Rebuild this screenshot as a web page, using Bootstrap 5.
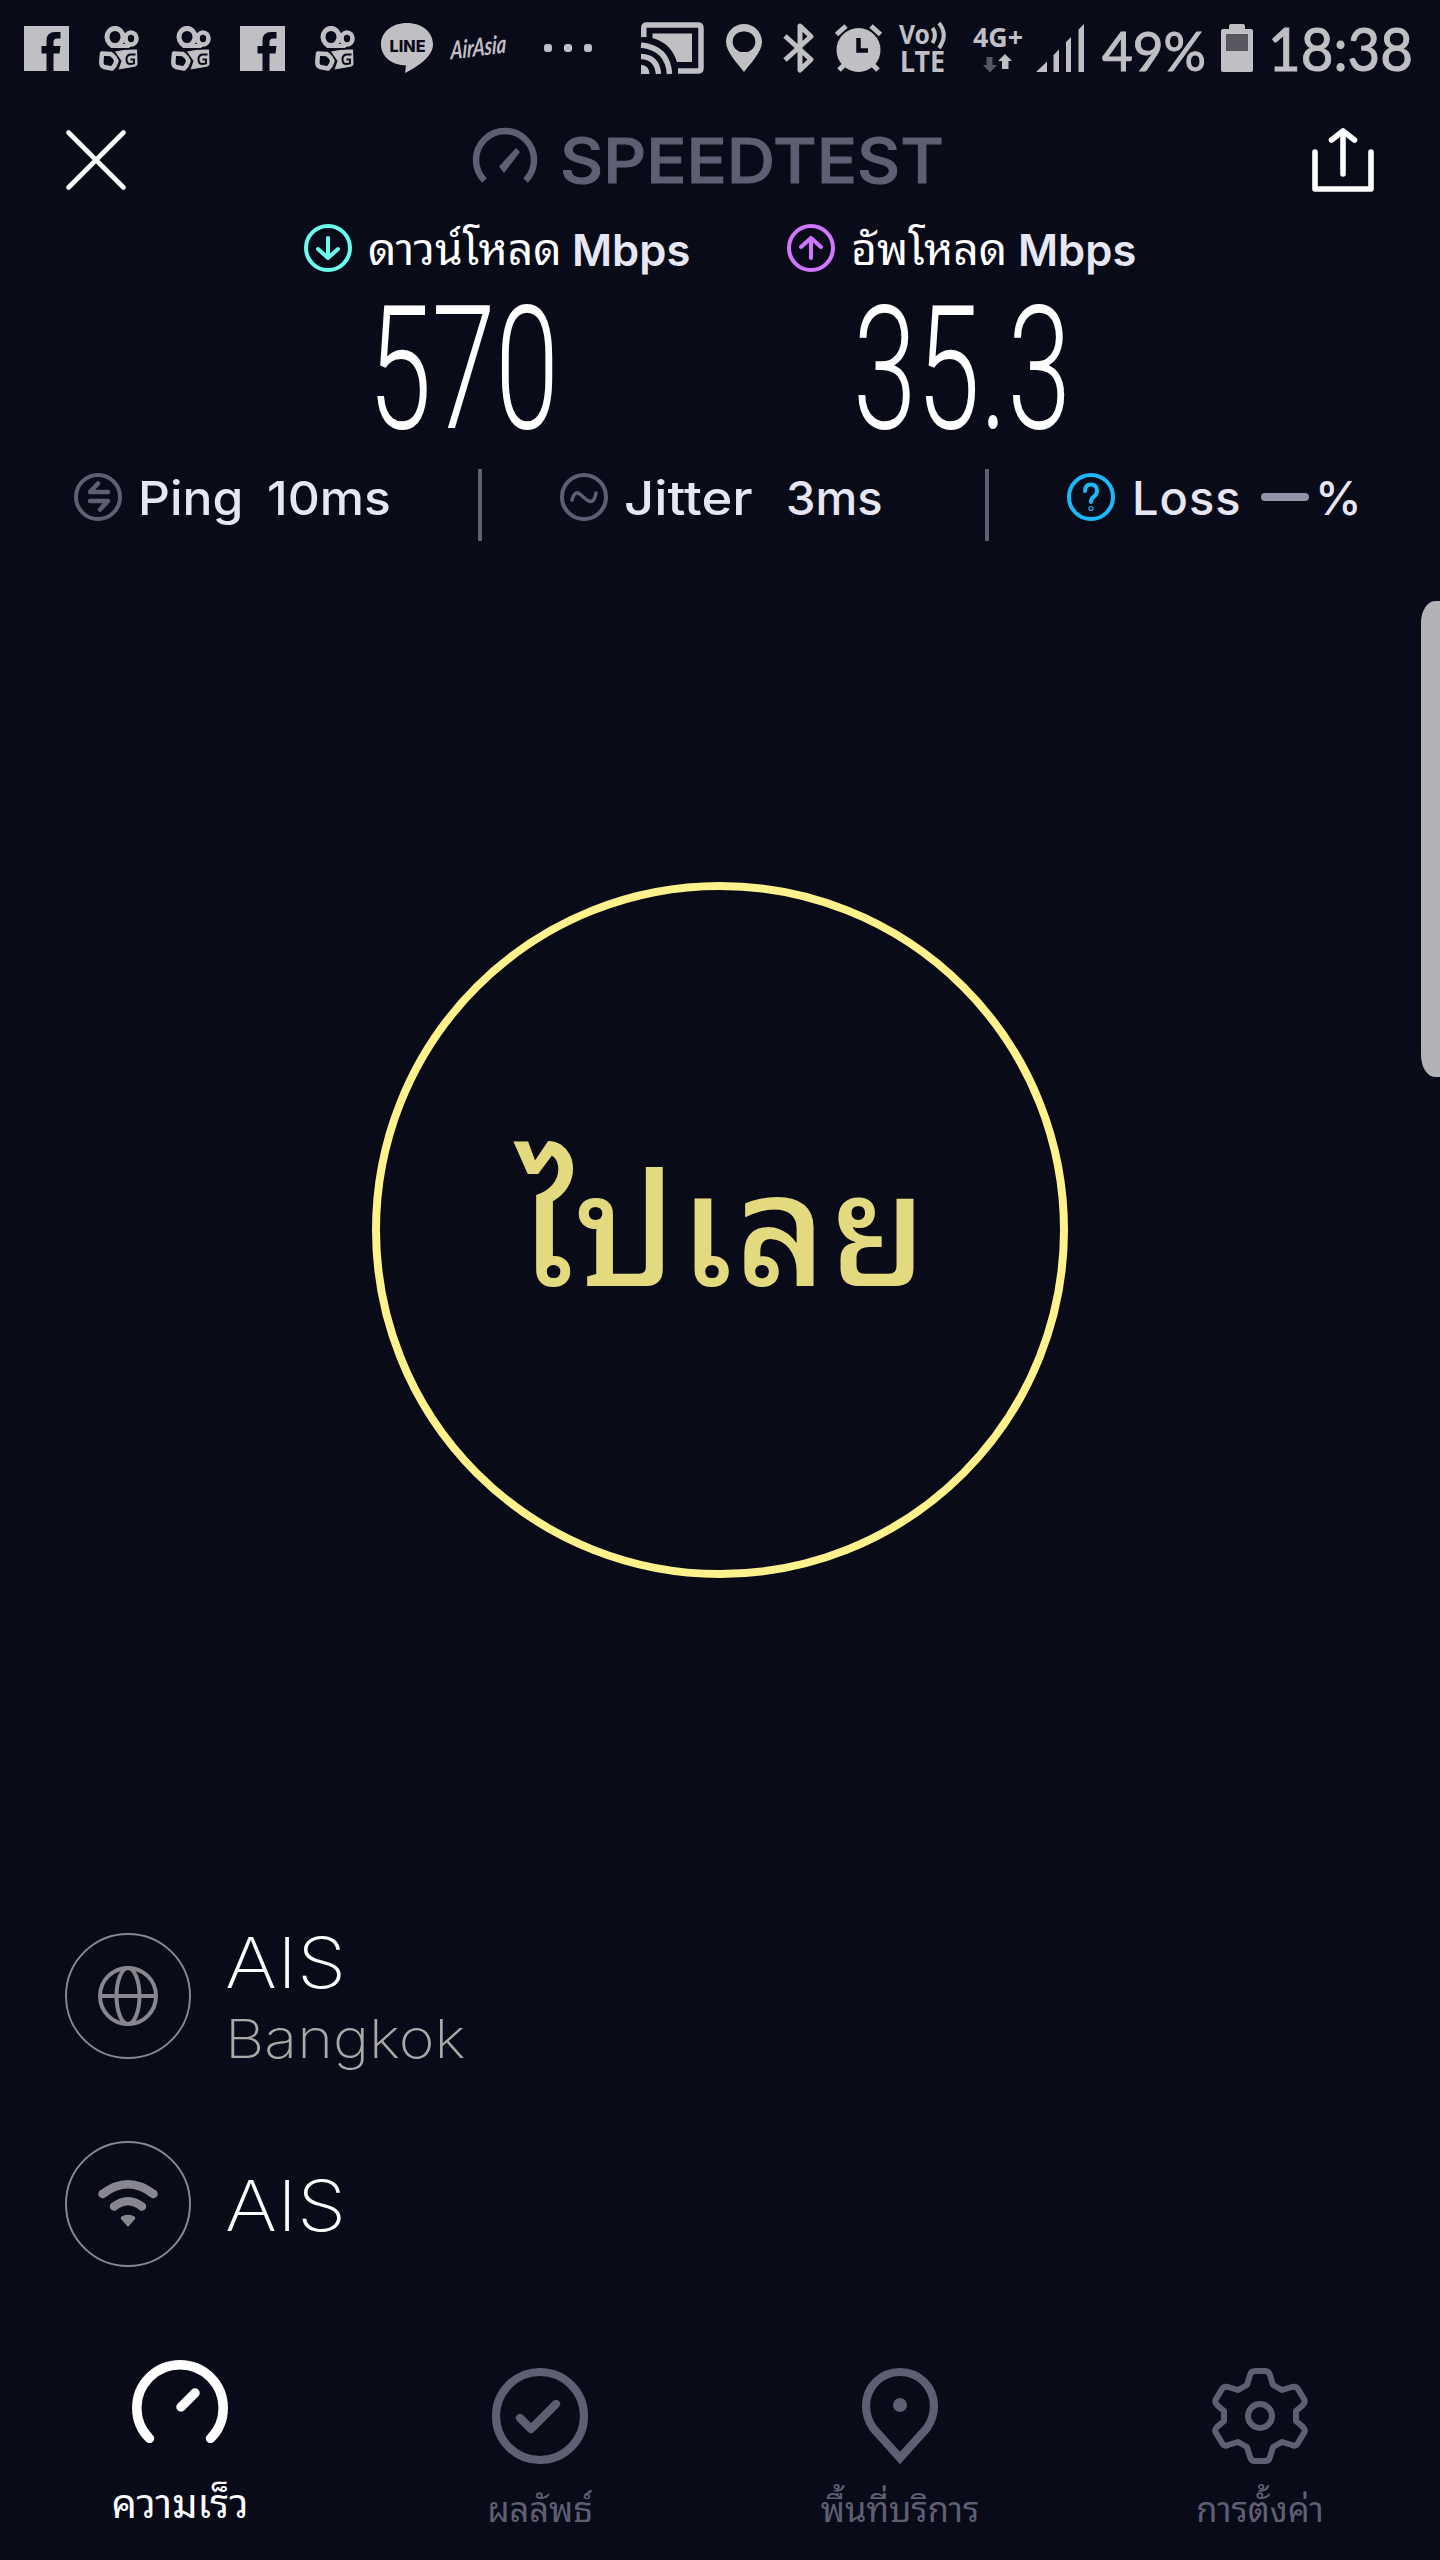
<!DOCTYPE html>
<html lang="th">
<head>
<meta charset="utf-8">
<meta name="viewport" content="width=device-width, initial-scale=1">
<title>Speedtest</title>
<link href="https://cdn.jsdelivr.net/npm/bootstrap@5.3.0/dist/css/bootstrap.min.css" rel="stylesheet">
<style>
:root{--ink:#090b19;--muted:#5e5f72;--soft:#e7e6f3;--sys:#c0bfc4}
body{background:var(--ink);color:#fff;font-family:Inter,"Noto Sans Thai Looped",Loma,Garuda,Waree,"Droid Sans Thai","Noto Sans Thai","Noto Sans",sans-serif;margin:0}
svg{display:block;flex:none;overflow:visible}
.phone{width:1440px;height:2560px;overflow:hidden}
.statusbar{height:96px;padding-left:24px;color:var(--sys)}
.appbar{height:128px;padding:0 66px}
.brand{color:var(--muted);margin-left:-25px}
.speeds{height:232px}
.speed-col{width:483px}
.speed-label{height:48px;line-height:48px;white-space:nowrap}
.th-label{font-size:44.5px;padding-top:1px}
.unit{font-weight:600;font-size:43.5px;color:var(--soft);padding-top:2px}
.metrics{height:90px;color:var(--soft);font-size:47px;font-weight:500;line-height:58px;white-space:nowrap}
.metrics .vbar{width:4px;height:72px;background:var(--muted);margin-top:13px}
.metric-item{padding-top:13px}
.metric-item span{transform-origin:0 50%}
.wide-1{transform:scaleX(1.06)}
.wide-2{transform:scaleX(1.12)}
.dash{width:48px;height:8px;border-radius:4px;background:#9292a8}
.hero{height:1387px;padding-top:336px}
.go{width:696px;height:696px;border:8px solid #fff28c;border-radius:50%;color:#e3d97f;font-size:156px;font-weight:500;line-height:1;letter-spacing:3px;background:none}
.host-row{padding-left:65px;height:126px}
.host-ring{width:126px;height:126px;border:2px solid #88878f;border-radius:50%}
.host-text{margin-left:34px;font-weight:200;white-space:nowrap;transform:scaleX(1.13);transform-origin:0 50%}
.host-name{font-size:70px;line-height:68px}
.host-city{font-size:54px;line-height:60px;color:#aaa9a7;padding-top:12px}
.tabs{height:236px;margin-top:57px}
.tab-link{width:360px;color:var(--muted);font-size:34.5px;line-height:51px;white-space:nowrap}
.tab-link.active{color:#fff;font-size:40px}
.edge-handle{position:absolute;right:0;top:601px;width:19px;height:476px;background:#b2b2b6;border-radius:14px 0 0 14px/22px 0 0 22px}
</style>
</head>
<body>
<svg width="0" height="0" class="position-absolute">
  <defs>
    <symbol id="fb" viewBox="0 0 45 45"><path fill="#c0bfc4" d="M0 0H45V45H29.5V27.5H35.5L36.5 20H29.5V16Q29.5 12.5 33 12.5H36.5V6H31Q22.500 6 22.500 14.500V20H17.500V27.500H22.500V45H0Z"/></symbol>
    <symbol id="kw" viewBox="0 0 40 45">
      <ellipse cx="16" cy="11" rx="8" ry="8.600" fill="none" stroke="#c0bfc4" stroke-width="5"/>
      <ellipse cx="32" cy="12.500" rx="5.500" ry="6" fill="none" stroke="#c0bfc4" stroke-width="4.600"/>
      <path fill="#c0bfc4" d="M9 18L34 18L30 22L12 22Z"/>
      <path fill="none" stroke="#c0bfc4" stroke-width="4.500" stroke-linejoin="round" d="M3 27.500L12 28Q16 31 17.500 35Q16 40 13 42.500L5 41Q2.300 40 2.300 36Z"/>
      <path fill="#c0bfc4" d="M16 25.500Q27 23 38 23.500L38.500 38Q38 40.500 34 41L19.500 43.500L22.500 35Z"/>
      <path fill="none" stroke="#090b19" stroke-width="2" d="M36.500 28.500H31.500Q27.500 29 27.500 33.500Q27.500 38 31.500 38L35 37.500V33.500H31.500"/>
    </symbol>
  </defs>
</svg>
<div class="phone d-flex flex-column position-relative">
  <header class="statusbar d-flex align-items-center">
    <svg width="45" height="45"><use href="#fb"/></svg>
    <svg width="40" height="45" style="margin-left:30px"><use href="#kw"/></svg>
    <svg width="40" height="45" style="margin-left:32px"><use href="#kw"/></svg>
    <svg width="45" height="45" style="margin-left:29px"><use href="#fb"/></svg>
    <svg width="40" height="45" style="margin-left:30px"><use href="#kw"/></svg>
    <svg width="52" height="50" viewBox="0 0 52 50" style="margin-left:26px">
      <path fill="#c0bfc4" d="M26 0C41 0 52 9 52 21.500C52 33 38 43 24 50L25 42.500C10 42 0 33 0 21.500C0 9 11 0 26 0Z"/>
      <text x="8.500" y="28.500" font-family="Inter" font-weight="800" font-size="16.500" textLength="36" lengthAdjust="spacingAndGlyphs" fill="#090b19">LINE</text>
    </svg>
    <svg width="56" height="50" viewBox="0 0 56 50" style="margin-left:17px">
      <text x="0" y="33" transform="rotate(-7 28 25) skewX(-8) translate(4 0)" font-family="Lato" font-style="italic" font-weight="700" font-size="25" textLength="56" lengthAdjust="spacingAndGlyphs" fill="#c0bfc4">AirAsia</text>
    </svg>
    <svg width="49" height="10" style="margin-left:38px"><g fill="#c0bfc4"><rect width="8" height="8" y="1" rx="3"/><rect x="20" y="1" width="8" height="8" rx="3"/><rect x="40" y="1" width="8" height="8" rx="3"/></g></svg>
    <svg width="63" height="52" viewBox="0 0 63 52" style="margin-left:48px">
      <g fill="none" stroke="#c0bfc4" stroke-width="5.500"><path d="M2.800 15V6Q2.800 3 6 3H57Q60 3 60 6V46Q60 49 57 49H37"/><path d="M0 23Q27 26 28.500 52M0 34.500Q16 35 17.500 52"/></g>
      <path fill="#c0bfc4" d="M11.500 11.500H51V40H36Q30 21 11.500 16ZM0 43Q8 43 8.500 52H0Z"/>
    </svg>
    <svg width="36" height="48" viewBox="0 0 36 48" style="margin-left:22px"><path fill="#c0bfc4" fill-rule="evenodd" d="M18 0C28 0 36 8 36 18C36 28 24 40 18 48C12 40 0 28 0 18C0 8 8 0 18 0ZM18 7.500A10.300 10.300 0 1 0 18 28A10.300 10.300 0 1 0 18 7.500Z"/></svg>
    <svg width="32" height="50" viewBox="0 0 32 50" style="margin-left:21px"><path fill="none" stroke="#c0bfc4" stroke-width="5" stroke-linejoin="round" d="M2 13L28 36.500L17 47V3L28 13.500L2 37"/></svg>
    <svg width="47" height="48" viewBox="0 0 47 48" style="margin-left:20px">
      <g stroke="#c0bfc4" stroke-width="5" fill="none"><path d="M1.500 10.500L11 2M36 2L45.500 10.500M4 46L11 39M43 46L36 39"/></g>
      <circle cx="23.500" cy="26" r="22" fill="#c0bfc4"/><path d="M23.500 14V26.500H33" fill="none" stroke="#090b19" stroke-width="4.500"/>
    </svg>
    <svg width="48" height="50" viewBox="0 0 48 50" style="margin-left:17px" fill="#c0bfc4" font-family="Noto Sans" font-weight="700">
      <text x="0" y="21" font-size="27" textLength="31" lengthAdjust="spacingAndGlyphs">Vo</text>
      <text x="1" y="48.500" font-size="28" textLength="45" lengthAdjust="spacingAndGlyphs">LTE</text>
      <path d="M33.500 5Q38.500 12 33.500 20M40 0Q49.500 12 40 25" fill="none" stroke="#c0bfc4" stroke-width="4"/>
    </svg>
    <svg width="50" height="50" viewBox="0 0 50 50" style="margin-left:26px" fill="#c0bfc4">
      <text x="0" y="24" font-family="Noto Sans" font-weight="700" font-size="27" textLength="50" lengthAdjust="spacingAndGlyphs">4G+</text>
      <path fill="#56575f" d="M13.500 34H19.500V42H24L17 49.500L10 42H13.500Z"/><path d="M29 46V38H25L32 31L39 38H35.500V46Z"/>
    </svg>
    <svg width="48" height="48" viewBox="0 0 48 48" style="margin-left:13px" fill="#c0bfc4"><path d="M0 48L11 37.500V48ZM17.500 31L23 25.500V48H17.500ZM30 18L35 13V48H30ZM42.500 5.500L48 0V48H42.500Z"/></svg>
    <svg width="102" height="50" viewBox="0 0 102 50" style="margin-left:19px" fill="#c0bfc4"><text x="-1" y="48" font-family="Lato" font-size="54" textLength="104" lengthAdjust="spacingAndGlyphs" stroke="#c0bfc4" stroke-width="1">49%</text></svg>
    <svg width="32" height="48" viewBox="0 0 32 48" style="margin-left:16px"><path fill="#c0bfc4" d="M8 5V2Q8 0 10 0H22Q24 0 24 2V5H30Q32 5 32 7V46Q32 48 30 48H2Q0 48 0 46V7Q0 5 2 5Z"/><path fill="#56575f" d="M5 10H27V27H5Z"/></svg>
    <svg width="140" height="50" viewBox="0 0 140 50" style="margin-left:18px" fill="#c0bfc4"><text x="-3" y="48" font-family="Lato" font-size="60" textLength="145" lengthAdjust="spacingAndGlyphs" stroke="#c0bfc4" stroke-width="1">18:38</text></svg>
  </header>

  <nav class="appbar d-flex justify-content-between align-items-center">
    <svg width="60" height="60" viewBox="0 0 60 60"><path d="M2.500 2.500L57.500 57.500M57.500 2.500L2.500 57.500" stroke="#fff" stroke-width="4.600" stroke-linecap="round"/></svg>
    <div class="brand d-flex align-items-center">
      <svg width="64" height="64" viewBox="0 0 64 64"><path d="M11.500 52.500A29 29 0 1 1 52.500 52.500" fill="none" stroke="#5e5f72" stroke-width="6.500"/><path fill="#5e5f72" d="M26 38.500L43 20L47 24L31 45Z"/></svg>
      <svg width="378" height="64" viewBox="0 0 378 64" style="margin-left:26px"><text x="-3" y="55" font-family="Inter" font-weight="500" font-size="62" textLength="384" lengthAdjust="spacingAndGlyphs" fill="#5e5f72" stroke="#5e5f72" stroke-width="1">SPEEDTEST</text></svg>
    </div>
    <svg width="62" height="64" viewBox="0 0 62 64"><path d="M3 24V61H59V24M31 46V3M19.500 12L31 3L42.500 12" fill="none" stroke="#fff" stroke-width="5.600" stroke-linecap="round" stroke-linejoin="round"/></svg>
  </nav>

  <section class="speeds d-flex">
    <div class="speed-col ps-0" style="margin-left:304px">
      <div class="speed-label d-flex">
        <svg width="48" height="48" viewBox="0 0 48 48" fill="none" stroke="#69fbee" stroke-linecap="round" stroke-linejoin="round"><circle cx="24" cy="24" r="22" stroke-width="4"/><path stroke-width="4" d="M24 14V34M14 25L24 34L34 25"/></svg>
        <span class="th-label" style="margin-left:16px;width:204px">ดาวน์โหลด</span><span class="unit">Mbps</span>
      </div>
      <svg width="180" height="140" style="margin:24px 0 0 70px"><text x="-6" y="132" font-family="Roboto" font-weight="300" font-size="172" textLength="191" lengthAdjust="spacingAndGlyphs" fill="#fff">570</text></svg>
    </div>
    <div class="speed-col">
      <div class="speed-label d-flex">
        <svg width="48" height="48" viewBox="0 0 48 48" fill="none" stroke="#d176ff" stroke-linecap="round" stroke-linejoin="round"><circle cx="24" cy="24" r="22" stroke-width="4"/><path stroke-width="4" d="M24 34V14M14 23L24 14L34 23"/></svg>
        <span class="th-label" style="margin-left:16px;width:167px">อัพโหลด</span><span class="unit">Mbps</span>
      </div>
      <svg width="210" height="140" style="margin:24px 0 0 69px"><text x="-3" y="132" font-family="Roboto" font-weight="300" font-size="172" textLength="218" lengthAdjust="spacingAndGlyphs" fill="#fff">35.3</text></svg>
    </div>
  </section>

  <section class="metrics d-flex">
    <div class="metric-item d-flex" style="width:404px;margin-left:74px">
      <svg class="mt-1" width="48" height="48" viewBox="0 0 48 48" fill="none" stroke="#5e5f72" stroke-linecap="round" stroke-linejoin="round"><circle cx="24" cy="24" r="22" stroke-width="4"/><path stroke-width="4.500" d="M34 19H16L24 10.500M16 28H34L26 36.500"/></svg>
      <span class="wide-1" style="width:129px;margin-left:16px">Ping</span><span class="wide-1">10ms</span>
    </div>
    <div class="vbar"></div>
    <div class="metric-item d-flex" style="width:425px;padding-left:78px">
      <svg class="mt-1" width="48" height="48" viewBox="0 0 48 48" fill="none" stroke="#5e5f72" stroke-linecap="round"><circle cx="24" cy="24" r="22" stroke-width="4"/><path stroke-width="3.500" d="M12 27Q15 16 21 22L27 27Q34 32 36 20"/></svg>
      <span class="wide-2" style="width:162px;margin-left:16px">Jitter</span><span>3ms</span>
    </div>
    <div class="vbar" style="margin-left:78px"></div>
    <div class="metric-item d-flex" style="padding-left:78px">
      <svg class="mt-1" width="48" height="48" viewBox="0 0 48 48" fill="none" stroke="#1cb8fc" stroke-linecap="round"><circle cx="24" cy="24" r="22" stroke-width="4"/><path stroke-width="4" d="M18 18Q18 11.500 24 11.500Q30 11.500 30 18Q30 21.500 27 23.500Q24 25.500 24 29"/><circle cx="24" cy="35.500" r=".6" stroke-width="4"/></svg>
      <span style="width:129px;margin-left:17px;letter-spacing:1px">Loss</span><span class="dash" style="margin-top:24px"></span><span style="margin-left:6px">%</span>
    </div>
  </section>

  <main class="hero d-flex justify-content-center align-items-start">
    <button type="button" class="go d-flex align-items-center justify-content-center p-0 ps-2">ไปเลย</button>
  </main>

  <section class="host-row d-flex">
    <div class="host-ring d-flex align-items-center justify-content-center">
      <svg width="60" height="60" viewBox="0 0 60 60" fill="none" stroke="#88878f" stroke-width="4"><circle cx="30" cy="30" r="28"/><ellipse cx="30" cy="30" rx="11.500" ry="28"/><path d="M2 30H58"/></svg>
    </div>
    <div class="host-text"><div class="host-name" style="margin-top:-4px">AIS</div><div class="host-city">Bangkok</div></div>
  </section>
  <section class="host-row d-flex align-items-center" style="margin-top:82px">
    <div class="host-ring d-flex align-items-center justify-content-center">
      <svg width="60" height="48" viewBox="0 0 60 48" fill="none" stroke="#88878f" stroke-width="8.500" stroke-linecap="round"><path d="M4.500 14Q30 -5.500 55.500 14M16 26.500Q30 16 44 26.500"/><path fill="#88878f" stroke="none" d="M23 39Q22 37 24.500 36Q30 33.500 35.500 36Q38 37 37 39L30 47Z"/></svg>
    </div>
    <div class="host-text host-name pt-1">AIS</div>
  </section>

  <nav class="tabs nav flex-nowrap text-center">
    <a class="tab-link active text-decoration-none d-flex flex-column align-items-center" style="padding-top:36px">
      <svg width="96" height="96" viewBox="0 0 96 96" fill="none" stroke="#fff" stroke-width="9.500" stroke-linecap="round"><path d="M17.500 78.500A43.200 43.200 0 1 1 78.500 78.500M49 47L63 33"/></svg>
      <span style="margin-top:22px">ความเร็ว</span>
    </a>
    <a class="tab-link text-decoration-none d-flex flex-column align-items-center" style="padding-top:44px">
      <svg width="96" height="96" viewBox="0 0 96 96" fill="none" stroke="#5e5f72" stroke-width="8.200" stroke-linecap="round" stroke-linejoin="round"><circle cx="48" cy="48" r="44"/><path d="M28 50L39 61L64 36"/></svg>
      <span style="margin-top:20px">ผลลัพธ์</span>
    </a>
    <a class="tab-link text-decoration-none d-flex flex-column align-items-center" style="padding-top:44px">
      <svg width="76" height="96" viewBox="0 0 76 96" fill="none" stroke="#5e5f72" stroke-width="8.200"><path d="M38 4C57 4 72 19 72 38C72 47 69 54 65 60L38 90L11 60C7 54 4 47 4 38C4 19 19 4 38 4Z"/><circle cx="38" cy="37" r="7" fill="#5e5f72" stroke="none"/></svg>
      <span style="margin-top:20px">พื้นที่บริการ</span>
    </a>
    <a class="tab-link text-decoration-none d-flex flex-column align-items-center" style="padding-top:44px">
      <svg width="96" height="96" viewBox="0 0 96 96" fill="none" stroke="#5e5f72" stroke-width="6" stroke-linejoin="round"><path d="M38 7Q39 3 43 3H53Q57 3 58 7L61 17L70 22L80 19Q84 18 86 21L92 31Q94 34 91 37L84 43V53L91 59Q94 62 92 65L86 75Q84 79 80 77L70 74L61 79L58 89Q57 93 53 93H43Q39 93 38 89L35 79L26 74L16 77Q12 79 10 75L4 65Q2 62 5 59L12 53V43L5 37Q2 34 4 31L10 21Q12 18 16 19L26 22L35 17Z"/><circle cx="48" cy="48" r="12"/></svg>
      <span style="margin-top:20px">การตั้งค่า</span>
    </a>
  </nav>
  <div class="edge-handle"></div>
</div>
<script src="https://cdn.jsdelivr.net/npm/bootstrap@5.3.0/dist/js/bootstrap.bundle.min.js"></script>
</body>
</html>
